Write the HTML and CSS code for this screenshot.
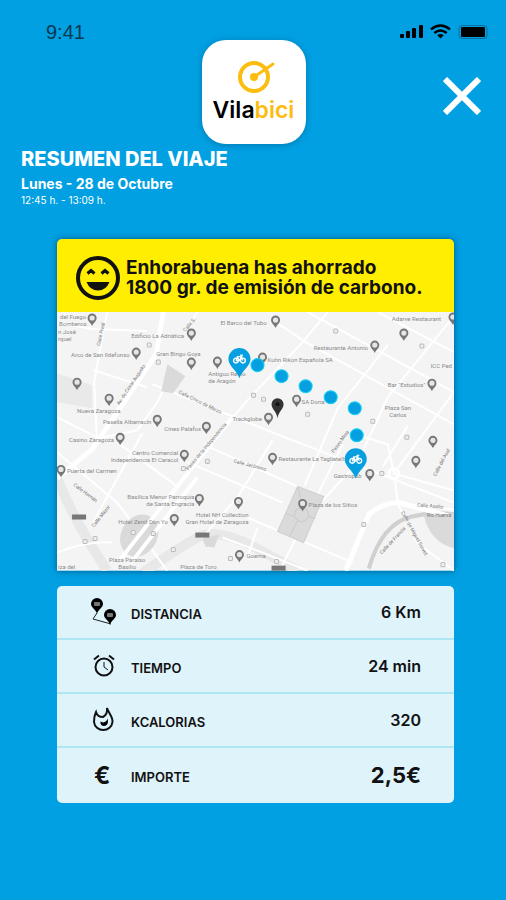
FILE: index.html
```html
<!DOCTYPE html>
<html lang="es">
<head>
<meta charset="utf-8">
<meta name="viewport" content="width=device-width, initial-scale=1.0">
<title>Vilabici - Resumen del viaje</title>
<link rel="stylesheet" href="styles.css">
</head>
<body>

<div class="status-bar">
  <span class="status-time">9:41</span>
  <svg class="status-icons" width="88" height="16" viewBox="0 0 88 16">
    <!-- signal -->
    <g>
      <rect x="0" y="10" width="4" height="4" rx="1"/>
      <rect x="6" y="7" width="4" height="7" rx="1"/>
      <rect x="12" y="4" width="4" height="10" rx="1"/>
      <rect x="19" y="1" width="4" height="13" rx="1"/>
    </g>
    <!-- wifi -->
    <g fill="none" stroke="#000" stroke-width="2.4">
      <path d="M31 5.4Q40.500 -2.400 50 5.400"/>
      <path d="M34.300 9Q40.500 3.800 46.700 9"/>
    </g>
    <path d="M37.300 11.200Q40.500 8.600 43.700 11.200L40.500 14.400Z"/>
    <!-- battery -->
    <rect x="59" y="1.500" width="28" height="13" rx="3" fill="none" stroke="#0b6f9c" stroke-width="1"/>
    <rect x="61" y="3" width="24" height="10" rx="1"/>
  </svg>
</div>

<header class="top">
  <div class="logo">
    <svg width="44" height="34" viewBox="0 0 44 34">
      <g fill="none" stroke="#fdbd10" stroke-linecap="round">
        <circle cx="22" cy="17" r="14" stroke-width="4"/>
        <path d="M22 17L41 4" stroke-width="3"/>
      </g>
      <circle cx="22" cy="17" r="4" fill="#fdbd10"/>
    </svg>
    <div class="logo-name">Vila<span>bici</span></div>
  </div>
  <button class="close" type="button" aria-label="Cerrar">
    <svg width="38" height="38" viewBox="0 0 38 38"><path d="M2 2L36 36M36 2L2 36" stroke="#fff" stroke-width="6"/></svg>
  </button>
</header>

<section class="trip">
  <h1>RESUMEN DEL VIAJE</h1>
  <p class="trip-date">Lunes - 28 de Octubre</p>
  <p class="trip-hours">12:45 h. - 13:09 h.</p>
</section>

<main>
  <section class="card">
    <div class="banner">
      <svg class="smile" width="46" height="46" viewBox="0 0 46 46">
        <circle cx="23" cy="23" r="20" fill="none" stroke="#111" stroke-width="4"/>
        <path d="M12.500 18.500L16 15.500L19.500 18.500M26.500 18.500L30 15.500L33.500 18.500" fill="none" stroke="#111" stroke-width="3"/>
        <path d="M11.500 27H34.500Q31 35.500 23 35.500Q15 35.500 11.500 27Z" fill="#111"/>
      </svg>
      <p>Enhorabuena has ahorrado<br>1800 gr. de emisión de carbono.</p>
    </div>

    <svg class="map" viewBox="0 0 396 258" role="img" aria-label="Mapa del recorrido">
      <defs>
        <g id="pin">
          <path d="M0 7C-1 4-4.500 2.500-4.500-1A4.500 4.500 0 0 1 4.500-1C4.500 2.500 1 4 0 7Z" fill="#777"/>
          <circle cy="-1" r="2.600" fill="#e6e6e6"/>
        </g>
        <g id="bike-pin">
          <path d="M0 19C-3 11-11 7-11 0A11 11 0 0 1 11 0C11 7 3 11 0 19Z" fill="#069fe0"/>
          <g fill="none" stroke="#fff" stroke-width="1.300">
            <circle cx="-3.500" cy="1.500" r="2.400"/>
            <circle cx="3.500" cy="1.500" r="2.400"/>
            <path d="M-3.500 1.500L-2-2.500H2L0 1.500H-3.500M0 1.500L-2.500-2.500M3.500 1.500L1.500-4H3.500"/>
          </g>
        </g>
        <g id="stop"><rect x="-2" y="-2" width="4" height="4" rx="1" fill="#eee" stroke="#bbb"/></g>
      </defs>
      <rect width="396" height="258" fill="#f4f4f4"/>

      <!-- wide avenues -->
      <g fill="none" stroke="#e8e8e8" stroke-width="10">
        <path d="M0 166Q18 210 50 258"/>
        <path d="M86 260Q120 236 140 225T203 238L240 258"/>
      </g>
      <path d="M311 256Q324 211 354 204Q375 199 397 202" fill="none" stroke="#d0d0d0" stroke-width="4"/>

      <!-- streets -->
      <g fill="none" stroke="#fff" stroke-width="2">
        <path d="M0 11L36 17L90 19M50 0L37 70L40 130M36 58L90 75M95 72L230 126L396 190"/>
        <path d="M0 105L42 126L80 118L100 90L110 70M140 0L128 19M150 134L190 88L245 30L270 0"/>
        <path d="M218 10L248 30L396 112M250 0L396 80M320 0L396 40M396 4L330 85L300 150L265 188"/>
        <path d="M0 140L60 190L110 258M60 130L120 174M85 121L36 210M0 240Q30 228 55 230"/>
        <path d="M130 150L225 190M150 134L240 174M215 128L180 185L145 225M285 132L222 258"/>
        <path d="M190 205L295 250M247 173L280 96L330 33M200 215L190 245M350 113L325 154"/>
        <path d="M297 122L330 132L336 161L396 178M336 161L396 80M337 167L340 191L396 197M340 191L359 230L396 258"/>
      </g>
      <g fill="none" stroke="#fff" stroke-width="5">
        <path d="M106 0L99 42L35 137L0 166"/>
        <path d="M288 258L311 202Q325 190 341 190L396 205"/>
        <circle cx="336" cy="161" r="5" stroke-width="3"/>
        <path d="M165 225L205 240L250 258" stroke-width="2"/>
      </g>

      <!-- parks and blocks -->
      <g fill="#dadada">
        <path d="M0 61L35 73V96L0 90Z" fill="#e9e9e9"/>
        <path d="M110 52L128 64L116 81L104 79Z"/>
        <path d="M240 174L266 184L246 230L220 219Z" stroke="#cfcfcf"/>
        <ellipse cx="82" cy="223" rx="18" ry="22" transform="rotate(30 82 223)"/>
        <path d="M366 203L397 201V236Q372 230 366 203Z"/>
        <path d="M145 226L162 222L157 235L148 234Z"/>
      </g>
      <g fill="none" stroke="#cbcbcb">
        <circle cx="244" cy="202" r="7"/>
        <path d="M240 174L245 195M228 201L237 204M251 204L258 206M232 224L240 208"/>
      </g>
      <g fill="none" stroke="#fff" stroke-width="4">
        <path d="M175 105L127 165L63 247"/>
        <path d="M140 165L74 250"/>
      </g>

      <g>
        <use href="#stop" x="92" y="33"/><use href="#stop" x="101" y="50"/><use href="#stop" x="196" y="83"/>
        <use href="#stop" x="206" y="87"/><use href="#stop" x="278" y="19"/><use href="#stop" x="364" y="34"/>
        <use href="#stop" x="250" y="102"/><use href="#stop" x="315" y="109"/><use href="#stop" x="349" y="125"/>
        <use href="#stop" x="126" y="156"/><use href="#stop" x="150" y="149"/><use href="#stop" x="28" y="229"/>
        <use href="#stop" x="38" y="226"/><use href="#stop" x="76" y="220"/><use href="#stop" x="96" y="221"/>
        <use href="#stop" x="116" y="237"/><use href="#stop" x="173" y="246"/><use href="#stop" x="306" y="212"/>
        <use href="#stop" x="385" y="252"/><use href="#stop" x="324" y="161"/><use href="#stop" x="219" y="249"/>
      </g>
      <g fill="#777">
        <rect x="15" y="202" width="14" height="5"/>
        <rect x="138" y="220" width="14" height="5"/>
        <rect x="214" y="253" width="14" height="5"/>
      </g>

      <g>
        <use href="#pin" x="35" y="7"/><use href="#pin" x="134" y="22"/><use href="#pin" x="79" y="41"/>
        <use href="#pin" x="134" y="51"/><use href="#pin" x="160" y="50"/><use href="#pin" x="20" y="71"/>
        <use href="#pin" x="52" y="87"/><use href="#pin" x="100" y="108"/><use href="#pin" x="149" y="115"/>
        <use href="#pin" x="63" y="126"/><use href="#pin" x="211" y="106"/><use href="#pin" x="218" y="9"/>
        <use href="#pin" x="205" y="46"/><use href="#pin" x="317" y="34"/><use href="#pin" x="395" y="6"/>
        <use href="#pin" x="346" y="22"/><use href="#pin" x="374" y="72"/><use href="#pin" x="239" y="88"/>
        <use href="#pin" x="375" y="129"/><use href="#pin" x="127" y="143"/><use href="#pin" x="4" y="158"/>
        <use href="#pin" x="142" y="187"/><use href="#pin" x="181" y="190"/><use href="#pin" x="117" y="207"/>
        <use href="#pin" x="182" y="243"/><use href="#pin" x="215" y="146"/><use href="#pin" x="312" y="162"/>
        <use href="#pin" x="358" y="149"/><use href="#pin" x="245" y="192"/>
      </g>

      <!-- places -->
      <g class="place">
        <text x="3" y="7">del Fuego</text>
        <text x="2" y="14">Bomberos</text>
        <text x="1" y="22">n José</text>
        <text x="1" y="29">rquel</text>
        <text x="74" y="26">Edificio La Adriática</text>
        <text x="14" y="45">Arco de San Ildefonso</text>
        <text x="99" y="44">Gran Bingo Goya</text>
        <text x="151" y="64">Antiguo Reino</text>
        <text x="151" y="71">de Aragón</text>
        <text x="20" y="101">Nueva Zaragoza</text>
        <text x="46" y="112">Pasella Albarracín</text>
        <text x="107" y="119">Cines Palafox</text>
        <text x="12" y="130">Casino Zaragoza</text>
        <text x="175" y="109">Trackglobe</text>
        <text x="163" y="13">El Barco del Tubo</text>
        <text x="210" y="50">Kuhn Rikon Española SA</text>
        <text x="256" y="38">Restaurante Antonio</text>
        <text x="334" y="9">Adarve Restaurant</text>
        <text x="394" y="56" class="end">ICC Ped</text>
        <text x="330" y="75">Bar "Estudios"</text>
        <text x="340" y="98" class="mid">Plaza San</text>
        <text x="340" y="105" class="mid">Carlos</text>
        <text x="244" y="92">SA Dona</text>
        <text x="121" y="143" class="end">Centro Comercial</text>
        <text x="121" y="150" class="end">Independencia El Caracol</text>
        <text x="10" y="161">Puerta del Carmen</text>
        <text x="137" y="187" class="end">Basílica Menor Parroquia</text>
        <text x="137" y="194" class="end">de Santa Engracia</text>
        <text x="191" y="204" class="end">Hotel NH Collection</text>
        <text x="191" y="211" class="end">Gran Hotel de Zaragoza</text>
        <text x="61" y="211">Hotel Zenit Don Yo</text>
        <text x="70" y="249" class="mid">Plaza Paraíso</text>
        <text x="70" y="256" class="mid">Basilio</text>
        <text x="123" y="256">Plaza de Toro</text>
        <text x="1" y="256">iza del</text>
        <text x="189" y="245">Goerna</text>
        <text x="221" y="149">Restaurante La Tagliatella</text>
        <text x="276" y="166">Gastropub</text>
        <text x="251" y="195">Plaza de los Sitios</text>
      </g>
      <g class="street">
        <text transform="translate(62 93) rotate(-56)">Av. de César Augusto</text>
        <text transform="translate(121 81) rotate(26)">Calle Cinco de Marzo</text>
        <text transform="translate(43 34) rotate(-78)">Calle Predi</text>
        <text transform="translate(128 20) rotate(-50)">Calle S.</text>
        <text transform="translate(16 173) rotate(37)">Calle Hernán</text>
        <text transform="translate(37 215) rotate(-52)">Calle Mayor</text>
        <text transform="translate(131 158) rotate(-50)">Paseo de la Independencia</text>
        <text transform="translate(176 150) rotate(15)">Calle Jerónimo</text>
        <text transform="translate(276 141) rotate(-54)">Paseo Mina</text>
        <text transform="translate(359 194) rotate(5)">Calle Asalto</text>
        <text transform="translate(369 204)">Río Huerva</text>
        <text transform="translate(324 242) rotate(-47)">Calle de Francia</text>
        <text transform="translate(343 200) rotate(61)">Calle de Miguel Servet</text>
        <text transform="translate(378 164) rotate(-62)">Calle del Asal</text>
      </g>

      <!-- current position -->
      <path d="M220 106C219 99 214 97 214 92A6 6 0 0 1 226 92C226 97 221 99 220 106Z" fill="#333"/>
      <circle cx="220" cy="92" r="2" fill="#111"/>

      <!-- route -->
      <g fill="#069fe0" stroke="#10d2f2" stroke-width="1">
        <circle cx="200" cy="53" r="6.500"/>
        <circle cx="224" cy="64" r="6.500"/>
        <circle cx="248" cy="74" r="6.500"/>
        <circle cx="273" cy="85" r="6.500"/>
        <circle cx="297" cy="96" r="6.500"/>
        <circle cx="299" cy="123" r="6.500"/>
      </g>
      <use href="#bike-pin" x="182" y="47"/>
      <use href="#bike-pin" x="298" y="147"/>
    </svg>
  </section>

  <table class="stats">
    <tr>
      <td class="icon">
        <svg width="26" height="28" viewBox="0 0 26 28">
          <path d="M6 15L2 21L20 26" fill="none" stroke="#222" stroke-width="1"/>
          <path d="M6 16C5 11 0 10 0 6A6 6 0 0 1 12 6C12 10 7 11 6 16Z"/>
          <path d="M19 27C18 22 13 21 13 17A6 6 0 0 1 25 17C25 21 20 22 19 27Z"/>
          <g fill="#777">
            <rect x="3" y="4" width="6" height="4" rx="1"/>
            <rect x="16" y="15" width="6" height="4" rx="1"/>
          </g>
        </svg>
      </td>
      <th scope="row">DISTANCIA</th>
      <td class="value">6 Km</td>
    </tr>
    <tr>
      <td class="icon">
        <svg width="26" height="26" viewBox="0 0 26 26">
          <g fill="none" stroke="#111" stroke-width="2">
            <circle cx="13" cy="14" r="8.500"/>
            <path d="M3 6.500L8 2.500M23 6.500L18 2.500"/>
            <path d="M13 9V14L17 17" stroke-width="1"/>
          </g>
        </svg>
      </td>
      <th scope="row">TIEMPO</th>
      <td class="value">24 min</td>
    </tr>
    <tr>
      <td class="icon">
        <svg width="26" height="28" viewBox="0 0 26 28">
          <path d="M5 6C3 10 3 13 3 16A9.300 9 0 0 0 21.500 16C22 11 18 8 16 2C16.500 7 15 9.500 12 11C8 11 6 10 5 6Z" fill="none" stroke="#111" stroke-width="2"/>
          <path d="M16.500 12.500C17.500 16 17 20 13 20C10.500 20 9 18 9.500 15.500L12 16.500C14.500 16 16 15 16.500 12.500Z"/>
        </svg>
      </td>
      <th scope="row">KCALORIAS</th>
      <td class="value">320</td>
    </tr>
    <tr>
      <td class="icon euro">€</td>
      <th scope="row">IMPORTE</th>
      <td class="value total">2,5€</td>
    </tr>
  </table>
</main>

</body>
</html>
```
FILE: styles.css
```css
* {box-sizing: border-box;}

body {
  margin: 0;
  min-height: 100vh;
  font-family: Inter, "Open Sans", sans-serif;
  background: #00a0e2;
  color: #111;
}

h1, p {
  margin: 0;
}

.status-bar {
  display: flex;
  justify-content: space-between;
  align-items: flex-end;
  height: 40px;
  padding: 0 18px 0 46px;
}

.status-time {
  font-family: "Liberation Sans", Arial, sans-serif;
  font-size: 20px;
  line-height: 16px;
  color: #0a3850;
}

.top {
  display: grid;
  grid-template-columns: 1fr auto 1fr;
  align-items: center;
  padding: 0 25px 0 26px;
}

.logo {
  grid-column: 2;
  display: flex;
  flex-direction: column;
  align-items: center;
  justify-content: center;
  gap: 2px;
  width: 104px;
  height: 104px;
  border-radius: 24px;
  background: #fff;
  box-shadow: 0 1px 6px rgba(0, 60, 100, 0.4);
}

.logo-name {
  font-size: 23px;
  font-weight: 600;
  line-height: 28px;
  color: #000;
}

.logo-name span {
  color: #fdbd10;
}

.close {
  justify-self: end;
  padding: 8px 0 0;
  border: 0;
  background: none;
  cursor: pointer;
}

.close svg {
  display: block;
}

/* trip header */
.trip {
  padding: 3px 21px 0;
  color: #fff;
}

.trip h1 {
  font-size: 20px;
  font-weight: 800;
  line-height: 24px;
}

.trip-date {
  padding-top: 4px;
  font-size: 14px;
  font-weight: 700;
  line-height: 18px;
}

.trip-hours {
  font-size: 10px;
  line-height: 14px;
}

main {
  padding: 32px 52px 24px 57px;
}

.card {
  overflow: hidden;
  border-radius: 5px 5px 0 0;
  box-shadow: 0 0 6px rgba(0, 40, 80, 0.6);
}

.banner {
  display: flex;
  align-items: center;
  gap: 5px;
  min-height: 73px;
  padding: 4px 18px 0;
  background: #ffee00;
}

.banner p {
  font-size: 19px;
  font-weight: 700;
  line-height: 20px;
}

.smile {
  flex: none;
}

/* map */
.map {
  display: block;
  width: 100%;
  font-family: Roboto, sans-serif;
}

.place {
  font-size: 6px;
  fill: #8a8a8a;
}

.street {
  font-size: 5px;
  fill: #777;
}

.mid {
  text-anchor: middle;
}

.end {
  text-anchor: end;
}

/* stats */
.stats {
  width: 100%;
  margin-top: 15px;
  border-spacing: 0;
  border-radius: 5px;
  background: #dff3fb;
}

.stats td,
.stats th {
  height: 54px;
  padding: 0;
  border-bottom: 2px solid #b0e5f4;
}

.stats tr:last-child td,
.stats tr:last-child th {
  height: 55px;
  border-bottom: 0;
}

.stats .icon {
  width: 74px;
  padding-left: 34px;
}

.icon svg {
  display: block;
}

.stats th {
  padding-top: 4px;
  text-align: left;
  font-size: 13px;
  font-weight: 600;
}

.stats .value {
  padding-right: 33px;
  text-align: right;
  font-size: 16px;
  font-weight: 600;
}

.stats .total {
  font-size: 22px;
  font-weight: 700;
}

.stats .euro {
  padding-left: 37px;
  font-size: 24px;
  font-weight: 700;
}
```
